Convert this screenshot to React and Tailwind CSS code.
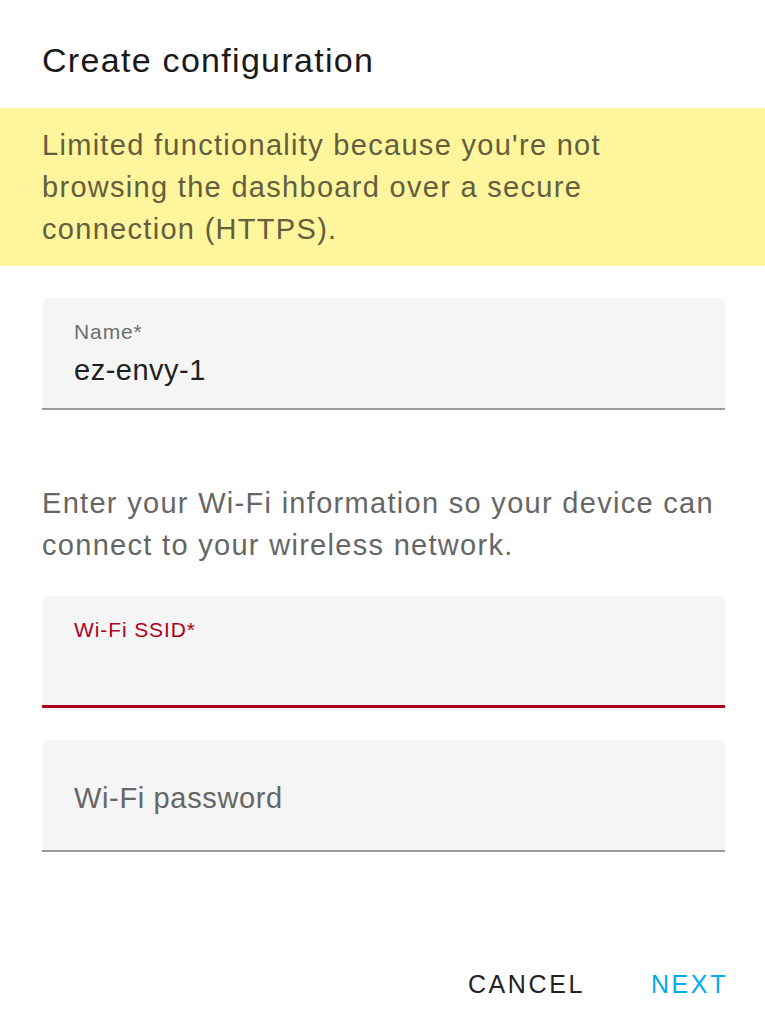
import React from "react";

const Field = ({ label, value, error }) => {
  const floated = value !== undefined || error;
  return (
    <div
      className={
        "h-[112px] bg-[#f5f5f5] rounded-t-[7px] px-[32px] flex flex-col " +
        (error ? "border-b-[3px] border-[#b00020]" : "border-b-2 border-[#9a9a9a]")
      }
    >
      {floated ? (
        <>
          <div
            className={
              "mt-[22px] text-[21px] leading-[24px] tracking-[0.9px] " +
              (error ? "text-[#b00020]" : "text-[#6e6e6e]")
            }
          >
            {label}
          </div>
          {value && (
            <div className="mt-[10px] text-[29px] leading-[32px] text-[#1f1f1f] tracking-[0.5px]">
              {value}
            </div>
          )}
        </>
      ) : (
        <div className="mt-[42px] text-[29px] leading-[32px] text-[#666666] tracking-[0.65px]">
          {label}
        </div>
      )}
    </div>
  );
};

const App = () => {
  return (
    <div className="w-[765px] h-[1024px] bg-white font-['Liberation_Sans',Arial,sans-serif] flex flex-col">
      <h2 className="px-[42px] pt-[40px] h-[108px] text-[34px] leading-[40px] text-[#1a1a1a] tracking-[1.3px]">
        Create configuration
      </h2>

      <div className="bg-[#fff59d] px-[42px] py-[16px] text-[29px] leading-[42px] text-[#625f3e] tracking-[1.3px]">
        Limited functionality because you're not
        <br />
        browsing the dashboard over a secure
        <br />
        connection (HTTPS).
      </div>

      <div className="pl-[42px] pr-[40px] pt-[32px] flex flex-col">
        <Field label="Name*" value="ez-envy-1" />

        <p className="mt-[72px] text-[29px] leading-[42px] text-[#666666] tracking-[1.3px]">
          Enter your Wi-Fi information so your device can
          <br />
          connect to your wireless network.
        </p>

        <div className="mt-[30px]">
          <Field label="Wi-Fi SSID*" error />
        </div>

        <div className="mt-[32px]">
          <Field label="Wi-Fi password" />
        </div>

        <div className="mt-[117px] mr-[-3px] flex justify-end items-center gap-[66px]">
          <button className="text-[25px] leading-[30px] tracking-[2.6px] text-[#222222]">
            CANCEL
          </button>
          <button className="text-[25px] leading-[30px] tracking-[2.6px] text-[#03a9f4]">
            NEXT
          </button>
        </div>
      </div>
    </div>
  );
};

export default App;
